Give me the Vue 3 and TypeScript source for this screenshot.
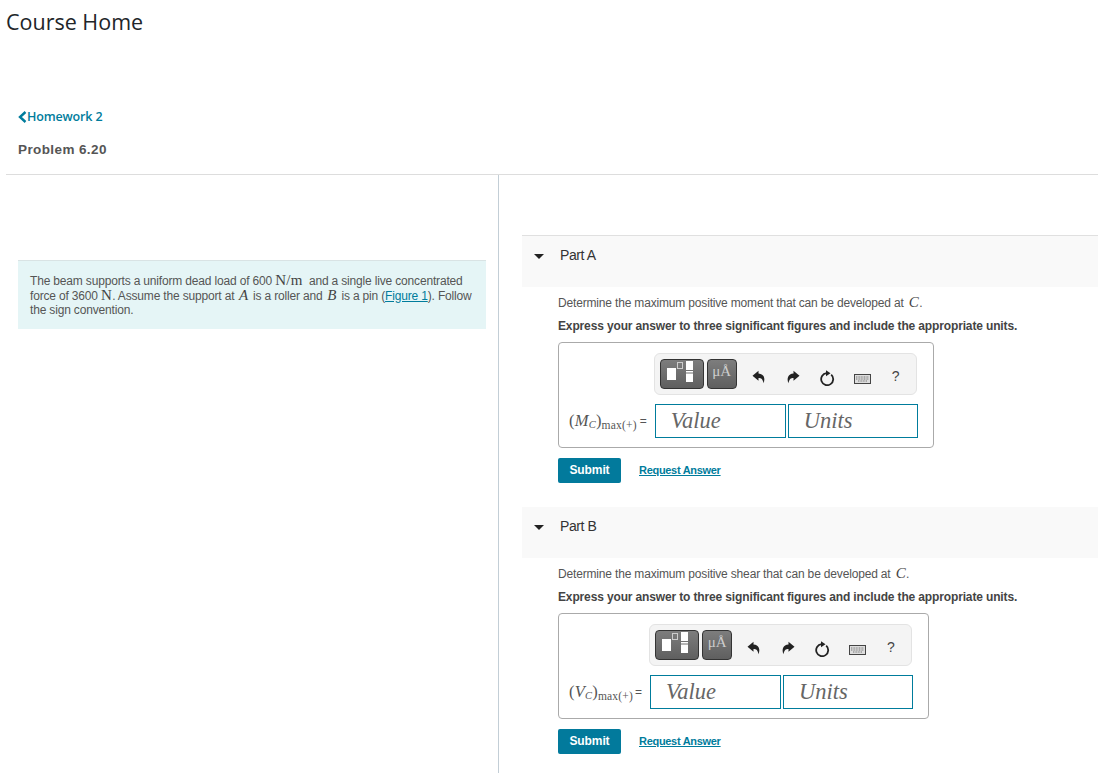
<script setup lang="ts">
interface Part { name: string; sym: string; verb: string }
const parts: Part[] = [
  { name: 'Part A', sym: 'M', verb: 'moment' },
  { name: 'Part B', sym: 'V', verb: 'shear' },
]
</script>

<template>
  <div class="page">
    <h1 class="title">Course Home</h1>
    <header class="crumbs">
      <a class="back"><svg class="chev" width="9" height="12" viewBox="0 0 9 12"><path d="M7.5 1 2 6l5.500 5" fill="none" stroke="currentColor" stroke-width="2.400"/></svg>Homework 2</a>
      <div class="problem">Problem 6.20</div>
    </header>
    <div class="columns">
      <section class="left">
        <div class="intro">
          The beam supports a uniform dead load of 600 <span class="m nm">N/m</span> and a single live concentrated force of 3600 <span class="m">N</span>. Assume the support at <i class="m mi">A</i> is a roller and <i class="m mi">B</i> is a pin (<a class="fig">Figure 1</a>). Follow the sign convention.
        </div>
      </section>
      <section class="right">
        <article v-for="p in parts" :key="p.name" class="part">
          <div class="part-head">
            <svg class="caret" width="10" height="5" viewBox="0 0 10 5"><path d="M0 0h10L5 5z" fill="#222"/></svg>
            <span>{{ p.name }}</span>
          </div>
          <div class="part-body">
            <p class="q">Determine the maximum positive {{ p.verb }} that can be developed at <i class="m mc">C</i>.</p>
            <p class="ask">Express your answer to three significant figures and include the appropriate units.</p>
            <div class="answer">
              <div class="toolbar">
                <div class="tb tb-wide">
                  <svg width="34" height="26" viewBox="0 0 34 26">
                    <rect x="2" y="7" width="9" height="12" fill="#fff"/>
                    <rect x="12.500" y="1.500" width="5" height="6" fill="none" stroke="#ccc"/>
                    <rect x="21" y="0" width="7" height="9" fill="#fff"/>
                    <rect x="21" y="10" width="7" height="1.500" fill="#fff"/>
                    <rect x="21" y="12.500" width="7" height="8.500" fill="#fff"/>
                  </svg>
                </div>
                <div class="tb tb-unit">μÅ</div>
                <svg class="ico undo" width="14" height="14" viewBox="0 0 14 14"><path d="M6.500.8.500 5.800l6 5V8c2.800 0 4.300 1.200 5 5.200C13.500 8.500 12 3.800 6.500 3.400z" fill="#222"/></svg>
                <svg class="ico redo" width="14" height="14" viewBox="0 0 14 14"><path d="M7.500.8l6 5-6 5V8c-2.800 0-4.300 1.200-5 5.200C.5 8.500 2 3.800 7.500 3.400z" fill="#222"/></svg>
                <svg class="ico reset" width="16" height="16" viewBox="0 0 16 16"><path d="M7.500 3.200A6 6 0 1 0 12.200 4.700" fill="none" stroke="#222" stroke-width="1.800"/><path d="M7 .2l4.500 3L7 6.200z" fill="#222"/></svg>
                <svg class="ico keys" width="17" height="10" viewBox="0 0 17 10"><rect x=".5" y=".5" width="16" height="9" fill="#ddd" stroke="#444"/><path d="M2 3h13M2 5h13M4 7h9" stroke="#777" stroke-dasharray="1 .6"/></svg>
                <span class="help">?</span>
              </div>
              <div class="row">
                <span class="label">(<i>{{ p.sym }}<sub class="subc">C</sub></i>)<sub class="subm">max(+)</sub></span>
                <span class="eq">=</span>
                <div class="field value">Value</div>
                <div class="field units">Units</div>
              </div>
            </div>
            <div class="actions">
              <button class="submit" type="button">Submit</button>
              <a class="req">Request Answer</a>
            </div>
          </div>
        </article>
      </section>
    </div>
  </div>
</template>

<style>
html, body { margin: 0; padding: 0; background: #fff; }
</style>

<style scoped>
.page { width: 1098px; height: 773px; overflow: hidden; font-family: "Liberation Sans", Arial, sans-serif; color: #555; box-sizing: border-box; }
.title { margin: 0; padding: 7px 0 0 6px; font: 400 21.500px/29px "Open Sans", sans-serif; color: #212529; }
.crumbs { margin-left: 6px; padding: 71px 0 0 12px; height: 139px; box-sizing: border-box; border-bottom: 1px solid #ddd; }
.back { display: flex; align-items: center; font: 600 12.500px/20px "Open Sans", sans-serif; color: #007c9c; letter-spacing: -0.15px; }
.chev { flex: none; }
.problem { margin-top: 13px; font: 700 13.500px/20px "Liberation Sans", sans-serif; color: #555; letter-spacing: .4px; }
.columns { display: flex; height: 598px; }
.left { flex: none; width: 499px; box-sizing: border-box; border-right: 1px solid #c3ced6; padding: 85px 0 0 6px; }
.intro { margin-left: 12px; width: 468px; height: 69px; box-sizing: border-box; padding: 13px 12px 0; background: #e5f5f6; border-top: 1px solid #d9e3e4; font-size: 12px; line-height: 14.500px; color: #555; letter-spacing: -0.17px; }
.m { font-family: "Liberation Serif", serif; font-size: 15px; line-height: 0; color: #444; letter-spacing: .3px; }
.nm { margin-right: 3px; }
.mi { margin: 0 1.500px; }
.mc { margin-left: 2px; }
.fig { color: #007c9c; text-decoration: underline; }
.right { flex: 1; padding: 60px 0 0 23px; min-width: 0; }
.part { margin-bottom: 24px; }
.part-head { display: flex; align-items: flex-start; height: 52px; box-sizing: border-box; padding-top: 11px; background: #f9f9f9; border-top: 1px solid #e0e0e0; font-size: 14px; line-height: 16px; color: #333; letter-spacing: -0.4px; }
.part:last-child .part-head { border-top: none; height: 51px; }
.caret { margin: 7px 16px 0 12px; flex: none; }
.part-body { padding: 9px 0 0 36px; }
.q { margin: 0; font-size: 12px; line-height: 15px; color: #555; letter-spacing: -0.17px; }
.ask { margin: 8px 0 0; font-size: 12px; line-height: 15px; font-weight: 700; color: #444; letter-spacing: -0.14px; }
.answer { margin-top: 8px; width: fit-content; box-sizing: border-box; padding: 10px 15px 9px 10px; border: 1px solid #aaa; border-radius: 4px; display: flex; flex-direction: column; align-items: flex-end; }
.toolbar { width: 263px; height: 42px; margin-right: 1px; box-sizing: border-box; display: flex; align-items: center; padding: 0 0 0 5px; background: #f4f4f4; border: 1px solid #e3e3e3; border-radius: 6px; }
.tb { height: 30px; box-sizing: border-box; border-radius: 4px; background: linear-gradient(#7d7d7d, #5f5f5f); border: 1px solid #333; display: flex; align-items: center; justify-content: center; color: #ccc; }
.tb-wide { width: 44px; margin-right: 3px; }
.tb-unit { width: 30px; font: 15px/1 "Liberation Serif", serif; padding-bottom: 5px; }
.ico { flex: none; display: block; }
.undo { margin: 6px 0 0 15px; }
.redo { margin: 6px 0 0 20px; }
.reset { margin: 8px 0 0 19px; }
.keys { margin: 10px 0 0 19px; }
.help { margin: 3px 0 0 21px; font-size: 14px; color: #444; }
.row { display: flex; align-items: center; margin-top: 9px; }
.label { font: 16.500px/1 "Liberation Serif", serif; color: #555; white-space: nowrap; letter-spacing: .2px; }
.part:last-child .label { margin-right: -1px; }
.label i { font-style: italic; }
.subc { font-size: 10.500px; vertical-align: -2px; line-height: 0; }
.subm { font-size: 11.500px; vertical-align: -3px; line-height: 0; }
.eq { font-size: 12px; margin: 0 8px 0 3px; color: #555; }
.field { height: 34px; box-sizing: border-box; border: 1px solid #007c9c; font: italic 22.500px/32px "Liberation Serif", serif; color: #666; padding-left: 15px; background: #fff; }
.value { width: 131px; margin-right: 2px; }
.units { width: 130px; }
.actions { display: flex; align-items: center; margin-top: 10px; }
.submit { width: 63px; height: 25px; padding: 0; border: none; border-radius: 2px; background: #027a9c; color: #fff; font: 700 12px/23px "Liberation Sans", sans-serif; letter-spacing: -0.1px; }
.req { margin-left: 18px; font-size: 11px; font-weight: 700; color: #007c9c; text-decoration: underline; letter-spacing: -0.3px; margin-top: -1px; }
</style>
